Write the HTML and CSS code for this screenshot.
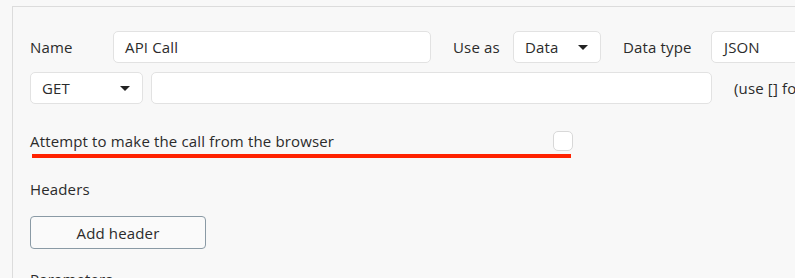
FILE: index.html
```html
<!DOCTYPE html>
<html>
<head>
<meta charset="utf-8">
<link rel="stylesheet" href="styles.css">
</head>
<body>
<div class="panel">
  <div class="row row1">
    <span class="label name-label">Name</span>
    <div class="field name-field">API Call</div>
    <span class="label use-label">Use as</span>
    <div class="field select data-select"><span>Data</span><span class="caret"></span></div>
    <span class="label type-label">Data type</span>
    <div class="field json-field">JSON</div>
  </div>
  <div class="row row2">
    <div class="field select get-select"><span>GET</span><span class="caret"></span></div>
    <div class="field url-field"></div>
    <span class="label hint">(use [] for dynamic values)</span>
  </div>
  <div class="browser-row">
    <span class="label">Attempt to make the call from the browser</span>
    <span class="checkbox"></span>
  </div>
  <div class="red-line"></div>
  <div class="section-title headers">Headers</div>
  <button class="btn">Add header</button>
  <div class="section-title params">Parameters</div>
</div>
</body>
</html>
```
FILE: styles.css
```css
html, body {
  margin: 0;
  padding: 0;
  background: #f8f8f8;
  overflow: hidden;
  width: 795px;
  height: 278px;
}
body {
  font-family: "Open Sans", "Noto Sans", sans-serif;
  font-size: 15px;
  letter-spacing: 0.15px;
  color: #2b2b2b;
}
.panel {
  margin: 6px 0 0 12px;
  border-left: 1px solid #dcdcdc;
  border-top: 1px solid #dcdcdc;
  padding: 24px 0 0 17px;
  height: 300px;
  box-sizing: border-box;
  width: 900px;
}
.row {
  display: flex;
  align-items: center;
  height: 32px;
  white-space: nowrap;
}
.row2 {
  margin-top: 9px;
}
.field {
  box-sizing: border-box;
  height: 32px;
  background: #fff;
  border: 1px solid #e2e2e2;
  border-radius: 5px;
  display: flex;
  align-items: center;
  padding: 0 11px;
  flex: none;
}
.name-label { width: 83px; flex: none; }
.name-field { width: 318px; }
.use-label { margin-left: 22px; width: 60px; flex: none; }
.data-select { width: 88px; }
.type-label { margin-left: 22px; width: 88px; flex: none; }
.json-field { width: 200px; padding-left: 12px; }
.select {
  justify-content: space-between;
}
.caret {
  width: 0;
  height: 0;
  border-left: 5px solid transparent;
  border-right: 5px solid transparent;
  border-top: 5px solid #222;
  margin-right: 1px;
}
.get-select { width: 113px; }
.url-field { width: 561px; margin-left: 8px; }
.hint { margin-left: 22px; }
.browser-row {
  margin-top: 27px;
  width: 543px;
  display: flex;
  align-items: center;
  justify-content: space-between;
  height: 20px;
  white-space: nowrap;
}
.checkbox {
  box-sizing: border-box;
  width: 20px;
  height: 20px;
  background: #fff;
  border: 1px solid #d8d8d8;
  border-radius: 5px;
  flex: none;
}
.red-line {
  margin: 3px 0 0 2px;
  width: 539px;
  height: 4px;
  background: #ff2200;
}
.section-title {
  line-height: 20px;
}
.headers {
  margin-top: 21px;
}
.btn {
  display: block;
  margin-top: 17px;
  width: 176px;
  height: 33px;
  box-sizing: border-box;
  background: #fafafa;
  border: 1px solid #8a9aa5;
  border-radius: 4px;
  font-family: inherit;
  font-size: 15px;
  letter-spacing: 0.15px;
  color: #2b2b2b;
  padding: 0;
}
.params {
  margin-top: 20px;
}
```
